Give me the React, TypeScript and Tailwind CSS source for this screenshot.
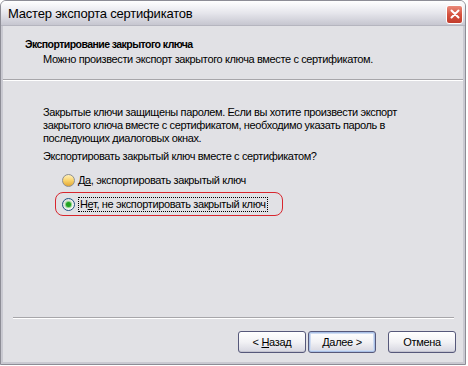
import React from 'react';

const font = { fontFamily: '"Liberation Sans", Arial, sans-serif' };

function Separator({ className = '' }: { className?: string }) {
  return (
    <div className={`flex flex-col ${className}`}>
      <div className="h-px bg-[#a7a6aa]" />
      <div className="h-px bg-white" />
    </div>
  );
}

function Radio({ checked, hover }: { checked?: boolean; hover?: boolean }) {
  if (hover) {
    return (
      <span className="w-[13px] h-[13px] rounded-full border border-[#8e8f8f] bg-gradient-to-b from-[#fff0b8] via-[#f9d36b] to-[#e2a732] flex items-center justify-center shrink-0" />
    );
  }
  return (
    <span className="w-[13px] h-[13px] rounded-full border border-[#1c5180] bg-gradient-to-br from-[#dcdcd8] to-white flex items-center justify-center shrink-0">
      {checked && <span className="w-[5px] h-[5px] rounded-full bg-[#21a121] shadow-[0_0_1px_1px_#7fd07f]" />}
    </span>
  );
}

function Button({ children, primary }: { children: React.ReactNode; primary?: boolean }) {
  return (
    <button
      className={`w-[68px] h-[22px] rounded-[3px] border border-[#56587a] bg-gradient-to-b from-white via-[#f2f2f5] to-[#d6d6e0] text-[11px] tracking-[-0.3px] text-black flex items-center justify-center ${
        primary ? 'shadow-[inset_0_0_0_1px_#a9c0e6,inset_0_0_0_2px_#cfdcf2]' : 'shadow-[inset_0_-1px_0_#c4c4d0]'
      }`}
      style={font}
    >
      <span className="whitespace-pre">{children}</span>
    </button>
  );
}

export default function App() {
  return (
    <div className="w-[468px] h-[366px] bg-white" style={font}>
      <div className="w-[466px] h-[365px] flex flex-col rounded-t-[6px] border border-[#8d8d96] bg-[#e1e1e5] overflow-hidden">
        {/* title bar */}
        <div className="h-[25px] flex items-center justify-between pl-[7px] pr-[2px] bg-gradient-to-b from-white via-[#e6e6ec] to-[#c6c6d0] border-b border-[#b5b5bf]">
          <span className="text-[13px] tracking-[-0.2px] text-black leading-none">Мастер экспорта сертификатов</span>
          <div className="w-[17px] h-[19px] rounded-[3px] border border-white bg-gradient-to-b from-[#e9897a] via-[#d5523f] to-[#c23c2c] flex items-center justify-center mt-[2px]">
            <svg width="10" height="10" viewBox="0 0 10 10">
              <path d="M1.5 1.5 L8.5 8.5 M8.5 1.5 L1.5 8.5" stroke="white" strokeWidth="2" strokeLinecap="round" />
            </svg>
          </div>
        </div>

        {/* body with side borders */}
        <div className="flex-1 flex flex-col border-l-2 border-r-2 border-[#c9c9d1]">
          {/* header */}
          <div className="h-[53px] flex flex-col pl-[22px] pt-[11px]">
            <div className="text-[10.5px] tracking-[-0.55px] font-bold text-black leading-[14px]">
              Экспортирование закрытого ключа
            </div>
            <div className="text-[11px] tracking-[-0.37px] text-black leading-[14px] pl-[18px] mt-[1px]">
              Можно произвести экспорт закрытого ключа вместе с сертификатом.
            </div>
          </div>
          <Separator />

          {/* content */}
          <div className="flex-1 flex flex-col pl-[40px] pt-[25px] text-[11px] tracking-[-0.37px] text-black">
            <p className="leading-[13px]">
              Закрытые ключи защищены паролем. Если вы хотите произвести экспорт
              <br />
              закрытого ключа вместе с сертификатом, необходимо указать пароль в
              <br />
              последующих диалоговых окнах.
            </p>
            <p className="leading-[13px] mt-[5px]">Экспортировать закрытый ключ вместе с сертификатом?</p>

            <div className="flex flex-col pl-[12px] mt-[9px]">
              <label className="flex items-center gap-[3px] h-[16px] pl-[7px]">
                <Radio hover />
                <span>
                  Д<u>а</u>, экспортировать закрытый ключ
                </span>
              </label>
              <div className="mt-[4px] w-[228px] h-[24px] rounded-[8px] border-[1.5px] border-[#d8262e] flex items-center pl-[6px] gap-[3px]">
                <Radio checked />
                <span className="border border-dotted border-black px-px leading-[13px]">
                  Н<u>е</u>т, не экспортировать закрытый ключ
                </span>
              </div>
            </div>
          </div>

          {/* footer */}
          <Separator className="ml-[10px] mr-[9px]" />
          <div className="h-[43px] flex items-start justify-end gap-[2px] pr-[7px] pt-[12px]">
            <Button>
              {'< '}
              <u>Н</u>азад
            </Button>
            <Button primary>
              <u>Д</u>алее {'>'}
            </Button>
            <div className="w-[8px]" />
            <Button>Отмена</Button>
          </div>
        </div>
        <div className="h-[2px] bg-[#c9c9d1]" />
      </div>
    </div>
  );
}
